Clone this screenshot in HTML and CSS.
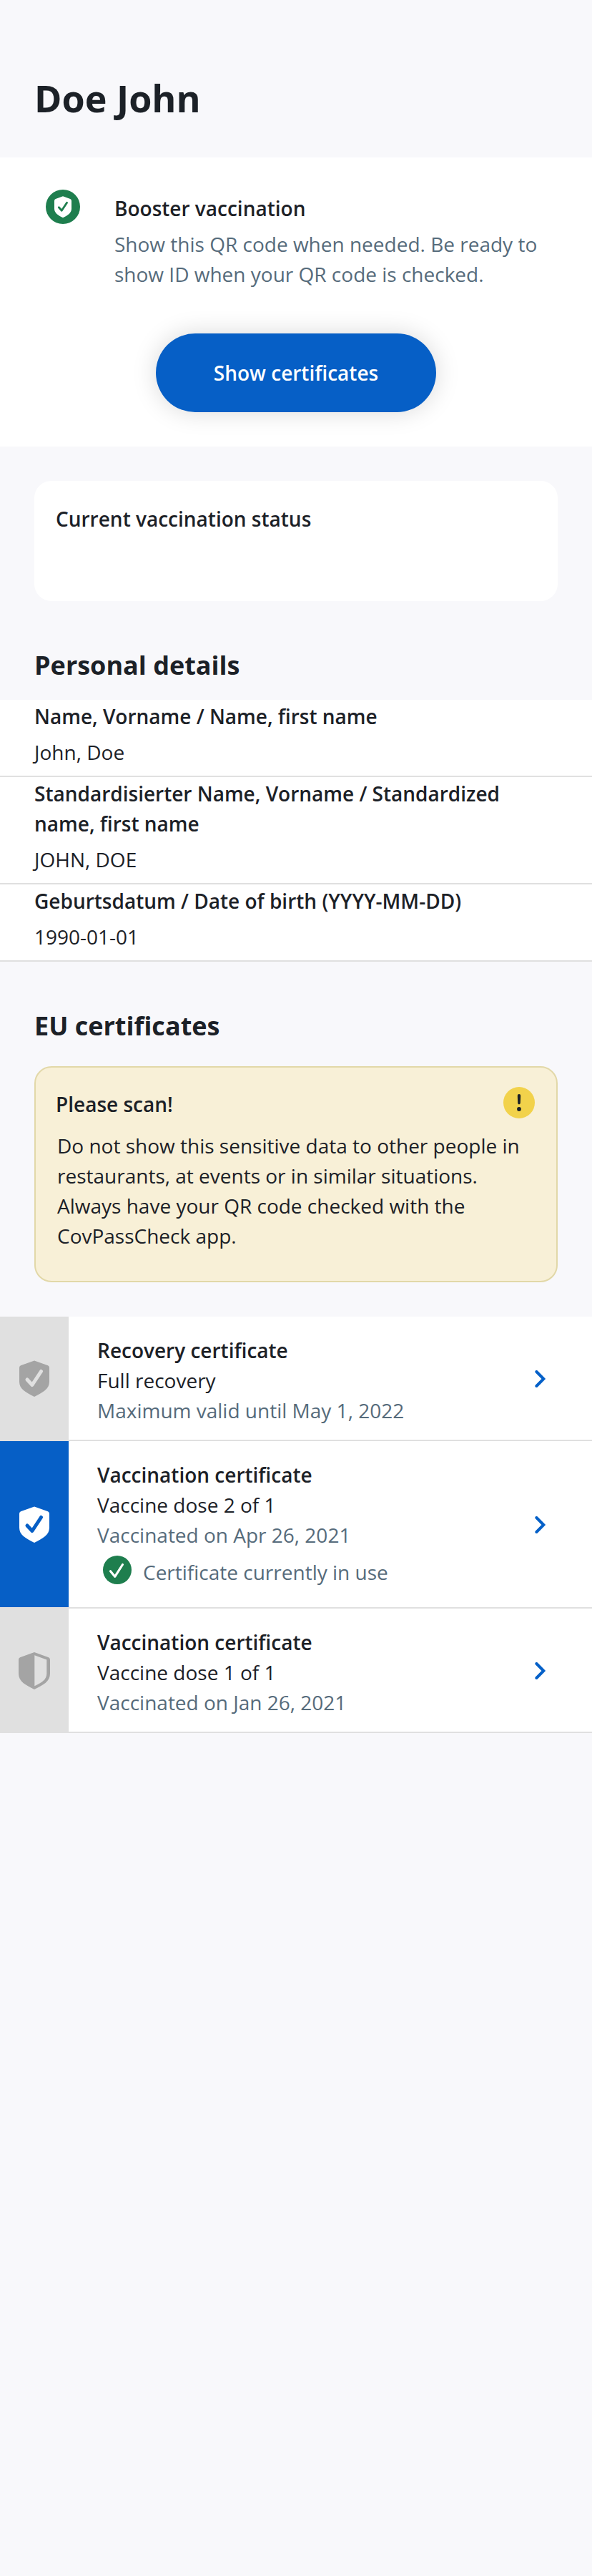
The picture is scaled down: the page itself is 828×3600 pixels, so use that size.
FILE: index.html
```
<!DOCTYPE html>
<html lang="en">
<head>
<meta charset="utf-8">
<title>Doe John</title>
<link rel="stylesheet" href="styles.css">
</head>
<body>
<header class="header"><h1 class="title">Doe John</h1></header>
<section class="booster">
  <div class="booster-row">
    <svg class="booster-icon" width="48" height="48" viewBox="0 0 48 48"><circle cx="24" cy="24" r="24" fill="#1e7e4e"/><path d="M24 9.3 34.2 13Q36 13.7 36 15.500V26.500C36 32.500 31 36 24 39.200C17 36 12 32.500 12 26.500V15.500Q12 13.700 13.800 13Z" fill="#fff"/><path d="M18.300 24.800 22.300 29.300 29.600 18.300" fill="none" stroke="#1e7e4e" stroke-width="2.800" stroke-linecap="round" stroke-linejoin="round"/></svg>
    <div class="booster-text">
      <h2 class="label">Booster vaccination</h2>
      <p class="muted">Show this QR code when needed. Be ready to show ID when your QR code is checked.</p>
    </div>
  </div>
  <button class="button" type="button">Show certificates</button>
</section>
<section class="status"><h2 class="label">Current vaccination status</h2></section>
<h2 class="heading heading-personal">Personal details</h2>
<dl class="details">
  <div class="detail"><dt class="label">Name, Vorname / Name, first name</dt><dd class="value">John, Doe</dd></div>
  <div class="detail"><dt class="label">Standardisierter Name, Vorname / Standardized name, first name</dt><dd class="value">JOHN, DOE</dd></div>
  <div class="detail"><dt class="label">Geburtsdatum / Date of birth (YYYY-MM-DD)</dt><dd class="value">1990-01-01</dd></div>
</dl>
<h2 class="heading heading-eu">EU certificates</h2>
<section class="notice">
  <div class="notice-head">
    <h3 class="label notice-title">Please scan!</h3>
    <svg width="44" height="44" viewBox="0 0 44 44"><circle cx="22" cy="22" r="22" fill="#f2d24b"/><path d="M19.800 12.200a2.200 2.200 0 0 1 4.400 0L23.800 22.600a1.800 1.800 0 0 1-3.600 0Z" fill="#1c2127"/><circle cx="22" cy="31" r="2.900" fill="#1c2127"/></svg>
  </div>
  <p class="notice-text">Do not show this sensitive data to other people in restaurants, at events or in similar situations. Always have your QR code checked with the CovPassCheck app.</p>
</section>
<ul class="certs">
  <li class="cert">
    <div class="side"><svg width="44" height="52" viewBox="0 0 44 52"><path d="M22 .5 41 7.300Q43 8 43 10.500V30C43 40 34 45 22 51C10 45 1 40 1 30V10.500Q1 8 3 7.300Z" fill="#a4a4a4"/><path d="M12 27 19 34.500 31.500 15.500" fill="none" stroke="#e0e0e0" stroke-width="5" stroke-linecap="round" stroke-linejoin="round"/></svg></div>
    <div class="cert-body"><h3 class="label">Recovery certificate</h3><p>Full recovery</p><p class="muted">Maximum valid until May 1, 2022</p></div>
    <svg class="chevron" width="16" height="24" viewBox="0 0 16 24"><path d="M2.400 2 12.300 12 2.400 22" fill="none" stroke="#0560c8" stroke-width="4" stroke-linecap="round"/></svg>
  </li>
  <li class="cert">
    <div class="side side-active"><svg width="44" height="52" viewBox="0 0 44 52"><path d="M22 .5 41 7.300Q43 8 43 10.500V30C43 40 34 45 22 51C10 45 1 40 1 30V10.500Q1 8 3 7.300Z" fill="#fff"/><path d="M12 27 19 34.500 31.500 15.500" fill="none" stroke="#065fc6" stroke-width="5" stroke-linecap="round" stroke-linejoin="round"/></svg></div>
    <div class="cert-body"><h3 class="label">Vaccination certificate</h3><p>Vaccine dose 2 of 1</p><p class="muted">Vaccinated on Apr 26, 2021</p>
      <div class="in-use"><svg width="40" height="40" viewBox="0 0 40 40"><circle cx="20" cy="20" r="20" fill="#1e7e4e"/><path d="M10.500 21.800 16.700 29.300 27.500 12.500" fill="none" stroke="#fff" stroke-width="3.200" stroke-linecap="round" stroke-linejoin="round"/></svg><span class="in-use-text">Certificate currently in use</span></div>
    </div>
    <svg class="chevron" width="16" height="24" viewBox="0 0 16 24"><path d="M2.400 2 12.300 12 2.400 22" fill="none" stroke="#0560c8" stroke-width="4" stroke-linecap="round"/></svg>
  </li>
  <li class="cert">
    <div class="side"><svg width="44" height="52" viewBox="0 0 44 52"><path d="M22 0 42 7.300Q44 8 44 10.500V30C44 41 34 46 22 52C10 46 0 41 0 30V10.500Q0 8 2 7.300Z" fill="#a4a4a4"/><path d="M22.300 4.300 39.300 10.500V30C39.300 38.500 32 42.500 22.300 47.300Z" fill="#e0e0e0"/></svg></div>
    <div class="cert-body"><h3 class="label">Vaccination certificate</h3><p>Vaccine dose 1 of 1</p><p class="muted">Vaccinated on Jan 26, 2021</p></div>
    <svg class="chevron" width="16" height="24" viewBox="0 0 16 24"><path d="M2.400 2 12.300 12 2.400 22" fill="none" stroke="#0560c8" stroke-width="4" stroke-linecap="round"/></svg>
  </li>
</ul>
</body>
</html>
```
FILE: styles.css
```
* { box-sizing: border-box; margin: 0; padding: 0; }
body { background: #f8f8fb; color: #1c2127; font: 28px/42px "Open Sans", "Noto Sans", sans-serif; min-height: 3600px; }
svg { display: block; flex: none; }
.header { height: 220px; padding: 102px 48px 0; }
.title { font-size: 52px; line-height: 70px; font-weight: 700; }
.label { font-size: 28px; line-height: 42px; font-weight: 600; }
.muted { color: #566b7b; }
.booster { height: 404px; background: #fff; padding: 45px 64px 0; display: flex; flex-direction: column; align-items: center; }
.booster-row { display: flex; align-items: flex-start; gap: 48px; width: 100%; }
.booster-text { padding-top: 5px; width: 600px; }
.booster-text .muted { margin-top: 8px; }
.button { width: 392px; height: 110px; margin-top: 62px; border: 0; border-radius: 55px; background: #065fc6; color: #fff; font: inherit; font-weight: 600; box-shadow: 0 0 34px rgba(0, 0, 0, .15); }
.status { margin: 48px 48px 0; height: 168px; border-radius: 24px; background: #fff; padding: 32px 30px; }
.heading { font-size: 36px; line-height: 50px; font-weight: 700; padding-left: 48px; }
.heading-personal { margin: 65px 0 23px; }
.heading-eu { margin: 65px 0 31px; }
.details { background: #fff; }
.detail { padding: 2px 96px 12px 48px; border-bottom: 2px solid #e0e0e0; }
.detail .value { margin-top: 8px; }
.notice { margin: 0 48px; height: 302px; border: 2px solid #e2d8a8; border-radius: 24px; background: #f8f0d7; padding: 27px 30px 0 28px; }
.notice-head { display: flex; justify-content: space-between; height: 61px; }
.notice-title { padding-top: 3px; }
.notice-text { padding-left: 2px; }
.certs { margin-top: 48px; list-style: none; }
.cert { display: flex; align-items: center; background: #fff; border-bottom: 2px solid #e0e0e0; }
.side { align-self: stretch; width: 96px; padding-top: 2px; background: #e0e0e0; display: flex; align-items: center; justify-content: center; }
.side-active { background: #065fc6; }
.cert-body { flex: 1; padding: 26px 0 20px 40px; }
.in-use { display: flex; gap: 16px; padding: 8px 0 8px 8px; }
.in-use-text { padding-top: 2px; color: #566b7b; line-height: 42px; }
.chevron { margin: 2px 64px 0 0; }
```
